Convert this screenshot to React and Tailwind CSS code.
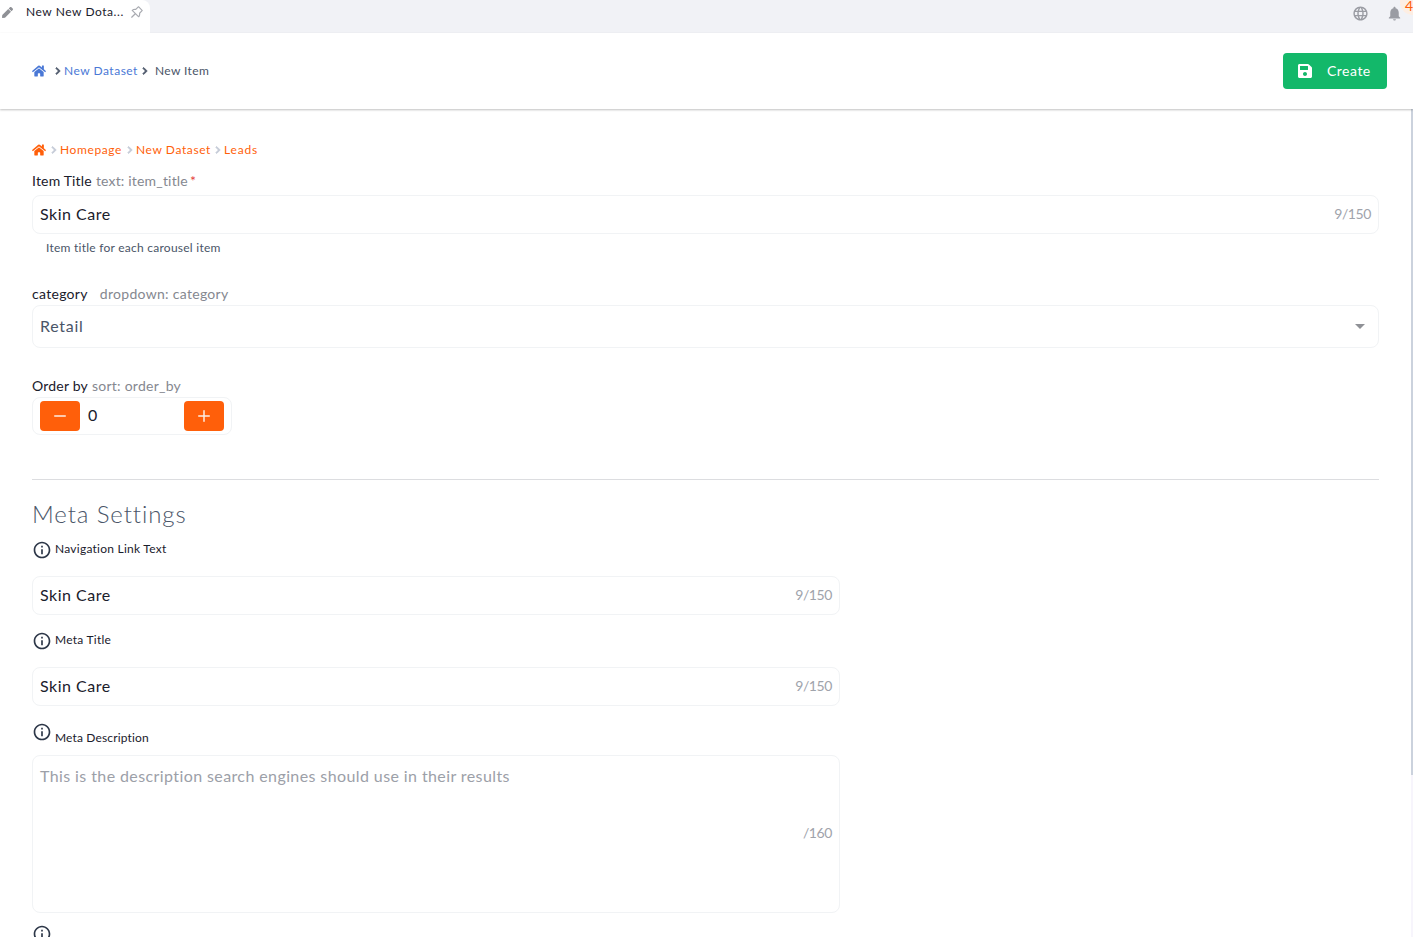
import React from 'react';
import { FaHome, FaChevronRight, FaSave, FaPen } from 'react-icons/fa';
import { AiOutlinePushpin } from 'react-icons/ai';
import { MdLanguage, MdNotifications, MdInfoOutline, MdArrowDropDown } from 'react-icons/md';
import { Minus, Plus } from 'lucide-react';

function Chevron({ className }) {
  return <FaChevronRight className={`w-2 h-2 stroke-[50] ${className}`} />;
}

function TextField({ value, count, className = '' }) {
  return (
    <div className={`h-[39px] flex items-center justify-between px-[7px] pb-[2px] border border-[#f1f3f5] rounded-lg ${className}`}>
      <span className="text-base text-[#1a202c] tracking-[0.5px]">{value}</span>
      <span className="text-sm text-[#a0a3ab] tracking-[-0.4px]">{count}</span>
    </div>
  );
}

function MetaLabel({ children }) {
  return (
    <div className="h-5 flex items-center gap-[3px] text-xs text-[#1a202c] tracking-[0.25px]">
      <MdInfoOutline className="mt-[2px] w-[20px] h-[20px] text-[#2d3748]" />
      <span>{children}</span>
    </div>
  );
}

export default function App() {
  return (
    <div className="h-screen flex flex-col overflow-hidden bg-white font-['Lato',sans-serif]">
      {/* Tabs */}
      <div className="h-[33px] shrink-0 flex items-stretch justify-between bg-[#f1f2f6]">
        <div className="w-[150px] bg-white rounded-tr-lg flex items-center pl-[2px] pb-[9px]">
          <FaPen className="w-[11px] h-[11px] text-[#8f9196]" />
          <span className="ml-[13px] text-xs text-[#1a202c] tracking-[0.55px] whitespace-nowrap">New New Dota...</span>
          <AiOutlinePushpin className="ml-[5px] w-[16px] h-[16px] text-[#a8aab0]" />
        </div>
        <div className="flex items-start pt-[5px]">
          <MdLanguage className="w-[17px] h-[17px] text-[#9a9ca3]" />
          <MdNotifications className="ml-[17px] w-[17px] h-[17px] text-[#9a9ca3]" />
          <div className="ml-[-3px] mt-[-5px] w-[13px] h-[15px] rounded-bl-full bg-[#fdeee3] text-sm text-[#ff5f0a] pl-[5px] leading-[11px]">4</div>
        </div>
      </div>

      {/* Top bar */}
      <div className="h-[76px] shrink-0 flex items-center justify-between pl-8 pr-[26px] bg-white shadow-[0_1px_2px_rgba(0,0,0,0.25)] relative">
        <div className="flex items-center text-xs tracking-[0.5px]">
          <FaHome className="w-[14px] h-[14px] text-[#4a78d6]" />
          <Chevron className="ml-2 text-[#4a5568]" />
          <span className="ml-[2px] text-[#4a78d6]">New Dataset</span>
          <Chevron className="ml-[3px] text-[#4a5568]" />
          <span className="ml-[6px] text-[#4a5568] tracking-[0.4px]">New Item</span>
        </div>
        <button className="w-[104px] h-9 rounded flex items-center pl-[14px] bg-[#13b86a] text-white text-sm tracking-[0.5px]">
          <FaSave className="w-4 h-4" />
          <span className="ml-[14px]">Create</span>
        </button>
      </div>

      <div className="flex-1 flex min-h-0">
        <div className="flex-1 min-w-0 pl-8 pr-8 overflow-hidden">
          {/* Trail */}
          <div className="mt-[31px] h-5 flex items-center text-xs text-[#ff5f0a] tracking-[0.6px]">
            <FaHome className="w-[14px] h-[14px]" />
            <Chevron className="ml-1 text-[#c3c9d6]" />
            <span className="ml-[2px]">Homepage</span>
            <Chevron className="ml-1 text-[#c3c9d6]" />
            <span className="ml-[2px]">New Dataset</span>
            <Chevron className="ml-[3px] text-[#c3c9d6]" />
            <span className="ml-[2px] tracking-[0.8px]">Leads</span>
          </div>

          <div className="mt-[11px] h-5 flex items-center text-sm text-[#1a202c] tracking-[0.18px]">
            <span>Item Title</span>
            <span className="ml-1 text-[#858890]">text: item_title</span>
            <span className="ml-[2px] text-[#e53e3e]">*</span>
          </div>
          <TextField value="Skin Care" count="9/150" className="mt-1" />
          <div className="mt-[6px] pl-[14px] h-4 flex items-center text-xs text-[#4a5568] tracking-[0.25px]">Item title for each carousel item</div>

          <div className="mt-7 h-5 flex items-center text-sm text-[#1a202c] tracking-[0.3px]">
            <span>category</span>
            <span className="ml-3 text-[#858890]">dropdown: category</span>
          </div>
          <div className="mt-[1px] h-[43px] flex items-center justify-between pl-[7px] pr-[6px] pb-[2px] border border-[#f1f3f5] rounded-lg">
            <span className="text-base text-[#4a5568] tracking-[0.7px]">Retail</span>
            <MdArrowDropDown className="w-6 h-6 text-[#8f9196]" />
          </div>

          <div className="mt-7 h-5 flex items-center text-sm text-[#1a202c] tracking-[0.2px]">
            <span>Order by</span>
            <span className="ml-1 text-[#858890] tracking-[0.25px]">sort: order_by</span>
          </div>
          <div className="mt-[1px] w-[200px] h-[38px] flex items-center justify-between px-[7px] border border-[#f1f3f5] rounded-lg">
            <div className="flex items-center">
              <div className="w-10 h-[30px] rounded flex items-center justify-center bg-[#ff5f0a] text-[#fdeee3]">
                <Minus size={18} />
              </div>
              <span className="ml-2 mb-[2px] text-base text-[#1a202c]">0</span>
            </div>
            <div className="w-10 h-[30px] rounded flex items-center justify-center bg-[#ff5f0a] text-[#fdeee3]">
              <Plus size={18} />
            </div>
          </div>

          <div className="mt-11 h-px bg-[#dcdde0]" />

          <div className="mt-[18px] h-8 flex items-center text-2xl font-light text-[#4a5568] tracking-[0.9px]">Meta Settings</div>

          <div className="mt-[9px]"><MetaLabel>Navigation Link Text</MetaLabel></div>
          <TextField value="Skin Care" count="9/150" className="mt-[17px] w-[808px]" />

          <div className="mt-[15px]"><MetaLabel>Meta Title</MetaLabel></div>
          <TextField value="Skin Care" count="9/150" className="mt-[17px] w-[808px]" />

          <div className="mt-4 h-6 flex items-start text-xs text-[#1a202c] tracking-[0.15px]">
            <MdInfoOutline className="w-[20px] h-[20px] text-[#2d3748]" />
            <span className="ml-[3px] mt-2">Meta Description</span>
          </div>
          <div className="mt-[9px] w-[808px] h-[158px] flex flex-col px-[7px] pt-[10px] border border-[#f1f3f5] rounded-lg">
            <span className="text-base leading-5 text-[#9ca0a8] tracking-[0.4px]">This is the description search engines should use in their results</span>
            <span className="self-end mt-[37px] text-sm text-[#a0a3ab] tracking-[-0.4px]">/160</span>
          </div>
          <div className="mt-[11px]">
            <MdInfoOutline className="w-[20px] h-[20px] text-[#2d3748]" />
          </div>
        </div>

        {/* Scrollbar */}
        <div className="w-[2px] shrink-0 flex flex-col bg-[#f7f5fc]">
          <div className="h-[666px] bg-[#cbd2dd]" />
        </div>
      </div>
    </div>
  );
}
